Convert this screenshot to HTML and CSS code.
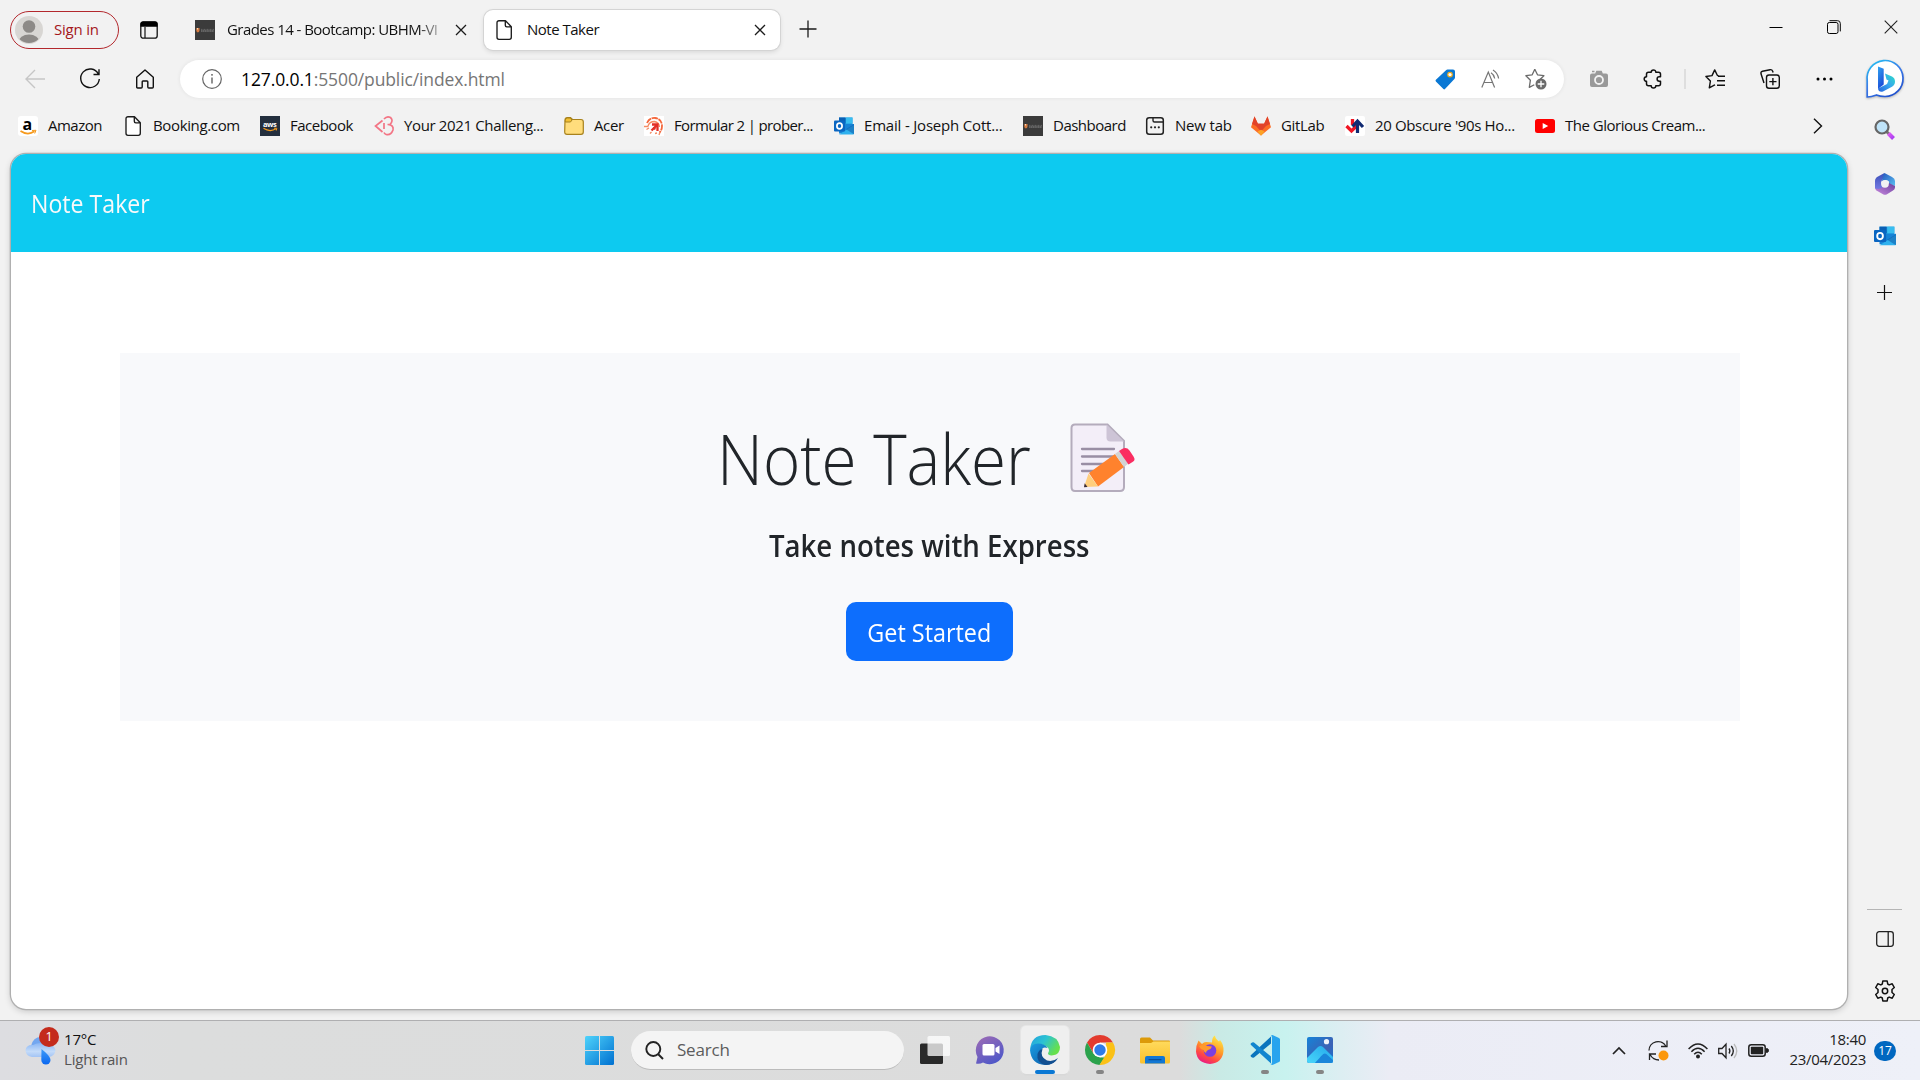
FILE: index.html
```html
<!DOCTYPE html>
<html lang="en">
<head>
<meta charset="utf-8">
<title>Note Taker</title>
<link rel="stylesheet" href="styles.css">
</head>
<body>
<svg class="defs" width="0" height="0" aria-hidden="true">
  <defs>
    <linearGradient id="bingRing" x1="0" y1="0" x2=".6" y2="1"><stop offset="0" stop-color="#20c8f3"/><stop offset=".55" stop-color="#3a7bea"/><stop offset="1" stop-color="#2354cf"/></linearGradient>
    <linearGradient id="bingB" x1="0" y1="0" x2=".4" y2="1"><stop offset="0" stop-color="#31a4f0"/><stop offset="1" stop-color="#1b4bd8"/></linearGradient>
    <linearGradient id="bingC" x1="1" y1="0" x2="0" y2="1"><stop offset="0" stop-color="#2be0c4"/><stop offset=".5" stop-color="#38a6ee"/><stop offset="1" stop-color="#2563dd"/></linearGradient>
    <linearGradient id="win" gradientUnits="userSpaceOnUse" x1="0" y1="0" x2="29" y2="29"><stop offset="0" stop-color="#4fd3fb"/><stop offset="1" stop-color="#0070d0"/></linearGradient>
    <linearGradient id="chat" x1="0" y1="0" x2=".6" y2="1"><stop offset="0" stop-color="#a06cb4"/><stop offset="1" stop-color="#5058c8"/></linearGradient>
    <linearGradient id="edgeTop" x1="0" y1="0" x2="1" y2=".5"><stop offset="0" stop-color="#239fe0"/><stop offset=".5" stop-color="#2cc3d2"/><stop offset="1" stop-color="#67e04c"/></linearGradient>
    <linearGradient id="edgeLow" x1="0" y1="0" x2="1" y2="1"><stop offset="0" stop-color="#1b9de2"/><stop offset="1" stop-color="#0c56a4"/></linearGradient>
    <linearGradient id="folder" x1="0" y1="0" x2="0" y2="1"><stop offset="0" stop-color="#ffda5c"/><stop offset="1" stop-color="#fbc02b"/></linearGradient>
    <linearGradient id="fox" x1=".8" y1="0" x2=".3" y2="1"><stop offset="0" stop-color="#fff04a"/><stop offset=".45" stop-color="#ff9a28"/><stop offset=".75" stop-color="#ff4844"/><stop offset="1" stop-color="#e8188a"/></linearGradient>
    <linearGradient id="photo" x1="0" y1="0" x2="1" y2="1"><stop offset="0" stop-color="#1683d8"/><stop offset=".6" stop-color="#3b62b5"/><stop offset="1" stop-color="#1674d2"/></linearGradient>
    <linearGradient id="hill" x1="0" y1="1" x2="1" y2="0"><stop offset="0" stop-color="#4bd8fb"/><stop offset="1" stop-color="#22a8ea"/></linearGradient>
    <linearGradient id="cloud" x1="0" y1="0" x2="0" y2="1"><stop offset="0" stop-color="#8ab6f4"/><stop offset=".6" stop-color="#c4dbf9"/><stop offset="1" stop-color="#a3c4f5"/></linearGradient>
    <linearGradient id="drop" x1="0" y1="0" x2="0" y2="1"><stop offset="0" stop-color="#3d9bf8"/><stop offset="1" stop-color="#0a67f0"/></linearGradient>
    <linearGradient id="m1" x1="0" y1="0" x2="0" y2="1"><stop offset="0" stop-color="#3a4fb8"/><stop offset="1" stop-color="#7b7fe8"/></linearGradient>
    <linearGradient id="m2" x1="0" y1="0" x2="1" y2="1"><stop offset="0" stop-color="#2456bd"/><stop offset="1" stop-color="#5bc0f2"/></linearGradient>
    <linearGradient id="m3" x1="0" y1="1" x2="1" y2="0"><stop offset="0" stop-color="#c98be0"/><stop offset="1" stop-color="#6a3f9e"/></linearGradient>
    <linearGradient id="handle" x1="0" y1="0" x2="1" y2="1"><stop offset="0" stop-color="#e05df5"/><stop offset="1" stop-color="#a63cf0"/></linearGradient>
    <symbol id="doc" viewBox="0 0 20 20"><path d="M5 .7h6.500l5.800 6V17.300a2 2 0 0 1-2 2H5a2 2 0 0 1-2-2V2.700a2 2 0 0 1 2-2zM11.300.7v4.600a1.500 1.500 0 0 0 1.500 1.500h4.500" fill="#fff" stroke="#1b1b1b" stroke-width="1.350" stroke-linejoin="round"/></symbol>
    <symbol id="uni" viewBox="0 0 20 20"><path fill="#3b3b3b" d="M0 0h20v20H0z"/><path d="M1.300 8h3.200v2.500q0 1.500-1.600 2-1.600-.5-1.600-2z" fill="#d77b40"/><path d="M2 8h1v1.500H2z" fill="#f3d9b9"/><path d="M6 9.400h13" stroke="#777" stroke-width=".7" stroke-dasharray="1 .5"/><path d="M6 11h13" stroke="#969696" stroke-width=".9" stroke-dasharray="1.500 .3"/></symbol>
    <symbol id="outlook" viewBox="0 0 20 20"><path fill="#1f9be0" d="M5 1.500h13.500V10H5z"/><path fill="#0a5fb4" d="M5 1.500h6.500v6H5z"/><path fill="#38bdf0" d="M12 1.500h6.500v6H12z"/><path fill="#1783d6" d="M5 8h15v9.500H5z"/><path fill="#2fb1ee" d="M5 18.500 20 9v8.500a1 1 0 0 1-1 1z"/><path fill="#0f5aa8" d="m20 8.300-8 5 8 5z" opacity=".55"/><rect x="0" y="4.500" width="11" height="11" rx="1" fill="#0a66c2"/><ellipse cx="5.500" cy="10" rx="2.600" ry="2.900" fill="none" stroke="#fff" stroke-width="1.700"/></symbol>
    <symbol id="x" viewBox="0 0 12 12"><path d="M1 1l10 10M11 1 1 11" fill="none" stroke="#1b1b1b" stroke-width="1.300"/></symbol>
  </defs>
</svg>

<div class="browser">
  <header class="tabstrip">
    <div class="signin">
      <svg width="28" height="28" viewBox="0 0 28 28"><clipPath id="av"><circle cx="14" cy="14" r="13"/></clipPath><circle cx="14" cy="14" r="14" fill="#d8d6d3"/><g clip-path="url(#av)" fill="#8d8a87"><circle cx="14" cy="10.500" r="6.300"/><ellipse cx="14" cy="26" rx="10.500" ry="7.500"/></g></svg>
      <span>Sign in</span>
    </div>
    <svg class="tab-actions" width="18" height="18" viewBox="0 0 18 18"><rect x=".8" y=".8" width="16.400" height="16.400" rx="2.500" fill="none" stroke="#111" stroke-width="1.300"/><path d="M.5 5.800V3A2.500 2.500 0 0 1 3 .5h12A2.500 2.500 0 0 1 17.500 3v2.800z" fill="#000"/><path d="M5 6v11" stroke="#111" stroke-width="1.200"/></svg>
    <div class="tab">
      <svg width="20" height="20"><use href="#uni"/></svg>
      <span class="tab-title faded">Grades 14 - Bootcamp: UBHM-VI</span>
      <svg class="tab-close" width="12" height="12"><use href="#x"/></svg>
    </div>
    <div class="tab active">
      <svg width="20" height="20"><use href="#doc"/></svg>
      <span class="tab-title">Note Taker</span>
      <svg class="tab-close" width="12" height="12"><use href="#x"/></svg>
    </div>
    <svg class="new-tab" width="18" height="18" viewBox="0 0 18 18"><path d="M9 .5v17M.5 9h17" stroke="#1b1b1b" stroke-width="1.300"/></svg>
    <div class="window-controls">
      <svg width="14" height="14" viewBox="0 0 14 14"><path d="M.5 7.500h13" stroke="#000" stroke-width="1"/></svg>
      <svg width="14" height="14" viewBox="0 0 14 14" fill="none" stroke="#000"><rect x=".5" y="2.500" width="10.500" height="11" rx="1.800"/><path d="M2.500.7h8A2.700 2.700 0 0 1 13.300 3.400v8"/></svg>
      <svg width="14" height="14" viewBox="0 0 14 14"><path d="m.7.7 12.600 12.600M13.300.7.7 13.300" stroke="#222" stroke-width="1.100"/></svg>
    </div>
  </header>

  <div class="toolbar">
    <svg class="nav" width="20" height="20" viewBox="0 0 20 20" fill="none" stroke="#c6c6c6" stroke-width="1.400"><path d="M20 10H1M10 1 1 10l9 9"/></svg>
    <svg class="nav" width="20" height="20" viewBox="0 0 20 20" fill="none" stroke="#111" stroke-width="1.400"><path d="M18.300 5A9.300 9.300 0 1 0 19.300 10M19 .3v5.200h-5.500"/></svg>
    <svg class="nav home" width="20" height="20" viewBox="0 0 20 20" fill="none" stroke="#111" stroke-width="1.400" stroke-linejoin="round"><path d="M1.700 8.300 10 1l8.300 7.300V18q0 1-1 1h-3.500q-1 0-1-1v-5.200q0-.8-.8-.8H8q-.8 0-.8.800V18q0 1-1 1H2.700q-1 0-1-1z"/></svg>
    <div class="omnibox">
      <svg class="info" width="20" height="20" viewBox="0 0 20 20"><circle cx="10" cy="10" r="9.300" fill="none" stroke="#666" stroke-width="1.200"/><path d="M10 8.500v6" stroke="#555" stroke-width="1.300"/><circle cx="10" cy="5.800" r=".9" fill="#555"/></svg>
      <span class="url"><b>127.0.0.1</b>:5500/public/index.html</span>
      <svg class="tag" width="21" height="21" viewBox="0 0 21 21"><path d="M11 1.200Q11.600.5 12.500.5H18q2 0 2 2v6q0 .8-.6 1.400L10 20q-.8.800-1.600 0L.9 12.400q-.8-.9 0-1.700z" fill="#0a78d4"/><circle cx="15" cy="5.600" r="2.300" fill="#fff" stroke="#e9a91d" stroke-width="1.200"/></svg>
      <svg class="read" width="20" height="20" viewBox="0 0 20 20" fill="none" stroke="#767676" stroke-width="1.200"><path d="M.8 18.500 7.300 3l6.300 15.500M3 13.500h8.600M10 3.800q3 1.800 3.700 5.700M12 1q4.600 2.800 5.600 8.500"/></svg>
      <svg class="fav" width="22" height="22" viewBox="0 0 22 22"><path d="m9.800 1.200 2.700 5.600 6.400.9-4.700 4.500M9.800 1.200 7.200 6.800.9 7.700l4.500 4.500-1.100 7.200 5-2.700" fill="none" stroke="#6b6b6b" stroke-width="1.300" stroke-linejoin="round"/><circle cx="16" cy="16" r="5.500" fill="#6b6b6b"/><path d="M16 12.700v6.600M12.700 16h6.600" stroke="#fff" stroke-width="1.300"/></svg>
    </div>
    <svg class="camera" width="18" height="18" viewBox="0 0 18 18"><path d="M2 3.500h3.200L6.300.8h5.400l1.100 2.700H16q2 0 2 2V15q0 2-2 2H2q-2 0-2-2V5.500q0-2 2-2z" fill="#999"/><circle cx="9" cy="10" r="4" fill="none" stroke="#f2f2f2" stroke-width="1.800"/><path d="M2 1.500h2.500" stroke="#999" stroke-width="1.500"/></svg>
    <svg class="puzzle" width="20" height="20" viewBox="0 0 20 20"><path d="M5.500 3.200h2.700a2.300 2.300 0 0 1 4.600 0h2.700q2 0 2 2v2.600h-1.200a2.200 2.200 0 0 0 0 4.400h1.200v2.600q0 2-2 2h-2.700a2.300 2.300 0 0 1-4.600 0H5.500q-2 0-2-2v-2.500a2.300 2.300 0 0 1 0-4.600V5.200q0-2 2-2z" fill="none" stroke="#111" stroke-width="1.500" stroke-linejoin="round"/></svg>
    <i class="divider"></i>
    <svg class="favs" width="20" height="20" viewBox="0 0 20 20" fill="none" stroke="#111" stroke-width="1.400" stroke-linejoin="round"><path d="M13.500 6.800 12.300 6.300 9.700.9 7 6.600.9 7.500l4.500 4.600-1.100 6.700 5-2.700.8-.3M13 7.200h7M12 11.700h8M12 16.200h8"/></svg>
    <svg class="coll" width="20" height="20" viewBox="0 0 20 20" fill="none" stroke="#111" stroke-width="1.400"><rect x="6.500" y="6" width="12.800" height="13.200" rx="2.500"/><path d="M12.900 9v7.200M9.300 12.600h7.200M4 14 1 4.800Q.5 2.800 2.500 2.300L10 .7q2-.3 2.700 1.500l.4 1.300"/></svg>
    <svg class="more" width="17" height="4" viewBox="0 0 17 4"><circle cx="2" cy="2" r="1.500"/><circle cx="8.500" cy="2" r="1.500"/><circle cx="15" cy="2" r="1.500"/></svg>
  </div>

  <nav class="bookmarks">
    <div class="tight"><svg width="20" height="20" viewBox="0 0 20 20"><rect width="20" height="20" rx="3" fill="#fff"/><text x="4.500" y="13.500" class="logo-a">a</text><path d="M2.500 15q7.500 5 14 .3" fill="none" stroke="#f69a1d" stroke-width="1.700"/><path d="m14 14.500 4-.2-1.300 3.200" fill="none" stroke="#f69a1d" stroke-width="1"/></svg><span>Amazon</span></div>
    <div><svg width="20" height="20"><use href="#doc"/></svg><span>Booking.com</span></div>
    <div class="tight"><svg width="20" height="20" viewBox="0 0 20 20"><path fill="#232f3e" d="M0 0h20v20H0z"/><text x="3" y="10.500" class="logo-aws">aws</text><path d="M3.500 12.300q6.500 4.200 12.500.5" fill="none" stroke="#f39a1e" stroke-width="1.200"/><path d="M14 12.200h2.800l-.5 2.300" fill="none" stroke="#f39a1e"/></svg><span>Facebook</span></div>
    <div><svg width="20" height="20" viewBox="0 0 20 20" fill="none" stroke="#f37585" stroke-width="1.700"><path d="M8.500 4.500 1.500 10l7 6M10 7v6M10 3q3-3.500 6.500-1.500 3.300 3-.5 7h-2.500M14 8.500q6 .5 5 5.500-2 5.500-6.800 4.500-1.500-.5-2.200-2"/></svg><span>Your 2021 Challeng...</span></div>
    <div><svg width="20" height="20" viewBox="0 0 20 20"><path d="M1 4q0-2.500 2.500-2.500h3l2 2H17q2.300 0 2.300 2.300V16q0 2.300-2.300 2.300H3Q.7 18.300.7 16z" fill="#ffdd7c" stroke="#a8821c" stroke-width="1.200"/><path d="M1.300 6V4.200Q1.300 2 3.500 2h2.800L8 4 6.500 6z" fill="#f2bf32" stroke="#a8821c"/></svg><span>Acer</span></div>
    <div class="tighter"><svg width="20" height="20" viewBox="0 0 20 20" fill="none"><path fill="#fff" d="M0 0h20v20H0z"/><path d="M3 7q2.500-5.500 8-5Q18 3 18 10q0 4-2.500 6.500" stroke="#f4673c" stroke-width="1.800" stroke-dasharray="6 .7"/><path d="M4 10q1.500-4.500 6.500-4.500Q15 6.500 15.500 11M0 10.500h4.500M2.500 13.500l2.500-1.500M6 17.500l1.500-1.500M11 17.500l2-.5M15 19l1-3" stroke="#f58b63" stroke-width="1.300"/><path d="M8 8.500h5.500V15M13 9l-5.500 5.500M9 12l2.500 1" stroke="#e32f27" stroke-width="2.300"/></svg><span>Formular 2 | prober...</span></div>
    <div class="loose"><svg width="20" height="20"><use href="#outlook"/></svg><span>Email - Joseph Cott...</span></div>
    <div class="tight"><svg width="20" height="20"><use href="#uni"/></svg><span>Dashboard</span></div>
    <div class="loose"><svg width="20" height="20" viewBox="0 0 20 20"><rect x="1.700" y="1.700" width="16.600" height="16.600" rx="2.500" fill="none" stroke="#222" stroke-width="1.500"/><path d="M8 2v2.500Q8 6 9.500 6H18" fill="none" stroke="#222" stroke-width="1.400"/><g fill="#222"><circle cx="6.200" cy="11.300" r="1.100"/><circle cx="10" cy="11.300" r="1.100"/><circle cx="13.800" cy="11.300" r="1.100"/></g></svg><span>New tab</span></div>
    <div><svg width="20" height="20" viewBox="0 0 20 20"><path fill="#fc6d26" d="M3.500.5 7 8h6L16.500.5 20 11.300 10 19.500 0 11.300z"/><path fill="#e2432a" d="M3.500.2 6.800 7.500h6.400L16.500.2 19 8l-4 2-5 5.500L5 10 1 8z"/><path fill="#fca326" d="m6.500 15.500 3.500-1.800 3.500 1.800-3.500 4.200z"/></svg><span>GitLab</span></div>
    <div><svg width="20" height="20" viewBox="0 0 20 20" fill="none"><rect width="20" height="20" rx="2" fill="#fff"/><path d="M7.500 3v6M1.500 10l5 5 6-6" stroke="#f01523" stroke-width="3.300"/><path d="M12.500 17V6M7.500 10.500l5-5.500 5.500 6" stroke="#102a72" stroke-width="3.200"/></svg><span>20 Obscure '90s Ho...</span></div>
    <div class="tight"><svg width="20" height="20" viewBox="0 0 20 20"><rect y="3" width="20" height="14" rx="2.500" fill="#f00"/><path d="m7.700 7 5.500 3-5.500 3z" fill="#fff"/></svg><span>The Glorious Cream...</span></div>
    <svg class="overflow" width="10" height="16" viewBox="0 0 10 16"><path d="m1 .8 7.500 7.200L1 15.200" fill="none" stroke="#111" stroke-width="1.400"/></svg>
  </nav>

  <main class="page">
    <div class="navbar"><a>Note Taker</a></div>
    <section class="hero">
      <h1><span>Note Taker</span>
        <svg width="66" height="70" viewBox="0 0 66 70"><path d="M5 1.500h32.500L54 18v46q0 4-4 4H5q-3.500 0-3.500-4V5q0-3.500 3.500-3.500z" fill="#f3eef8" stroke="#b4acbc" stroke-width="2"/><path d="M36.500 1.500 54 18.500H40.500q-4 0-4-4z" fill="#cdc4d6"/><path d="M12 26h32M12 33.500h32M12 41h24M12 48h14" stroke="#998ea4" stroke-width="2.300" stroke-linecap="round"/><path d="m19 50 26-19 9 13-26 19.500z" fill="#ff822d"/><path d="m45 31 4-3 9.500 12.500-4.500 3.500z" fill="#d3d3d3"/><path d="m49 28 3-2q4.500-2.500 7.500 1.500l4 6q2.500 4-1 5.500l-4 2.500z" fill="#fa2e61"/><path d="m18.500 50.500 9.500 13-14 .6z" fill="#ffce7c"/><path d="m14.700 60.200 2.800 3.700-3.500.3z" fill="#382c3a"/></svg>
      </h1>
      <h4>Take notes with Express</h4>
      <a class="btn"><span>Get Started</span></a>
    </section>
  </main>

  <aside class="sidebar">
    <svg class="bing" width="38" height="38" viewBox="0 0 38 38"><path d="M1.200 37V21A18 18 0 1 1 19 36.500q-5 0-8.500-1.500Q5 37 1.200 37z" fill="#fff" stroke="url(#bingRing)" stroke-width="1.700"/><path d="m12 6.500 5.700 2.300v15.700L12 29z" fill="url(#bingB)"/><path d="m19 13.500 7 3q3 1.500 3 5 0 3.500-3 5.300L17 31.500q-4.500 1-5-3l9-4.500 1.500-3.500-2-1z" fill="url(#bingC)"/></svg>
    <svg class="lens" width="22" height="22" viewBox="0 0 22 22"><path d="m12 12 3 3" stroke="#777" stroke-width="3"/><path d="m14.500 14.500 5 5" stroke="url(#handle)" stroke-width="4"/><circle cx="8" cy="8" r="6.500" fill="#bfe3f8" stroke="#666" stroke-width="2.200"/></svg>
    <svg class="m365" width="22" height="22" viewBox="0 0 22 22"><path fill="url(#m1)" d="M10.500 0 4 3.500Q1 5 1 8v7.500L5 18l4-3-2-5q0-2 2-4z"/><path fill="url(#m2)" d="M10.500 0 18 4q3 1.500 3 4v5l-6-2V8.500Q12 6 8 8l1-6z"/><path fill="url(#m3)" d="M1 15q4 2 7-.5l5-1.500 2-3 6 3v1.500q0 2-2 3l-6 3.700q-2 1.200-4 0l-7-4z"/><circle cx="11" cy="11" r="3.800" fill="#f2f2f2"/></svg>
    <svg class="olk" width="22" height="22"><use href="#outlook"/></svg>
    <svg class="add" width="15" height="15" viewBox="0 0 15 15"><path d="M7.500 0v15M0 7.500h15" stroke="#111" stroke-width="1.200"/></svg>
    <i class="rule"></i>
    <svg class="panel" width="18" height="16" viewBox="0 0 18 16" fill="none" stroke="#222" stroke-width="1.300"><rect x=".7" y=".7" width="16.600" height="14.600" rx="2.500"/><path d="M12.200 1v14"/></svg>
    <svg class="gear" width="22" height="22" viewBox="0 0 22 22" fill="none" stroke="#111" stroke-width="1.500" stroke-linejoin="round"><path d="M8.800 1h4.400l.5 3 1.500.9 3-1.100 2.100 3.700-2.300 2v3l2.300 2-2.100 3.700-3-1.100-1.500.9-.5 3H8.800l-.5-3-1.500-.9-3 1.100-2.100-3.700 2.300-2v-3l-2.300-2 2.100-3.700 3 1.100 1.500-.9z"/><circle cx="11" cy="11" r="2.700"/></svg>
  </aside>
</div>

<footer class="taskbar">
  <div class="weather">
    <div class="weather-icon">
      <svg width="31" height="30" viewBox="0 0 31 30"><path d="M6 11Q8 2 16 2t10 9z" fill="#73a7f0"/><path d="M7 22Q1 21 .5 15.500 1 9.500 8 10q8-4 13 0 8-1 9.500 5-.5 6.500-7.500 7z" fill="url(#cloud)"/><path d="M16.500 14q9 7 9 11a4.600 4.600 0 0 1-9.200 0z" fill="url(#drop)"/></svg>
      <b>1</b>
    </div>
    <div><p>17°C</p><p class="dim">Light rain</p></div>
  </div>

  <div class="apps">
    <div class="slot"><svg width="29" height="29" viewBox="0 0 29 29" fill="url(#win)"><path d="M1.500 0H14v14H0V1.500Q0 0 1.500 0z"/><path d="M15 0h12.500Q29 0 29 1.500V14H15z"/><path d="M0 15h14v14H1.500Q0 29 0 27.500z"/><path d="M15 15h14v12.500q0 1.500-1.500 1.500H15z"/></svg></div>
    <div class="search"><svg width="19" height="19" viewBox="0 0 19 19" fill="none" stroke="#222" stroke-width="1.900"><circle cx="8.300" cy="8" r="7"/><path d="m13 13 5 5"/></svg><span>Search</span></div>
    <div class="slot"><svg width="30" height="30" viewBox="0 0 30 30"><rect x="0" y="8.500" width="23" height="20.500" rx="1.500" fill="#292929"/><rect x="7.500" y="1" width="22.500" height="20" rx="1.500" fill="#fff" fill-opacity=".75"/></svg></div>
    <div class="slot"><svg width="30" height="30" viewBox="0 0 30 30"><path d="M1 28.500 2.500 22A14 14 0 1 1 8 27.500q-3 1.700-7 1z" fill="url(#chat)"/><rect x="7.500" y="9" width="12" height="11.500" rx="1.500" fill="#fff"/><path d="M20.500 13l4-2.500v8.500l-4-2.500z" fill="#fff"/></svg></div>
    <div class="slot current"><svg width="30" height="30" viewBox="0 0 30 30"><path d="M0 15Q1 0 15.500 0 28 1 30 12q0 7.500-7 8.300-5 .5-5-2 2-3 0-5.500Q13 8 6 9.500 2 11 0 15z" fill="url(#edgeTop)"/><path d="M0 15q1-6.500 8-6.500 7 0 9.500 4.500-5-2-6.500 3-1 7 5.500 10 5.500 2 10-1Q22 30 15 30 1 29 0 15z" fill="url(#edgeLow)"/><path d="M12.500 14q-3 8 4.500 11.500 6 1.700 11-2.500-4 7-12 7Q6 28 7.500 19q1.500-4.500 5-5z" fill="#124f91"/></svg><i class="bar"></i></div>
    <div class="slot"><svg width="30" height="30" viewBox="0 0 30 30"><path d="M2 7.500A15 15 0 0 1 28 7.500H15l-6.500 11z" fill="#e33b2e"/><path d="M2 7.500 8.500 18.700 15 22.500h5L14.500 30A15 15 0 0 1 2 7.500z" fill="#2ba24c"/><path d="M28 7.500A15 15 0 0 1 14.500 30l7-11.500-.5-11z" fill="#fbc116"/><circle cx="15" cy="15" r="7.300" fill="#fff"/><circle cx="15" cy="15" r="5.700" fill="#2f7be8"/></svg><i class="dot"></i></div>
    <div class="slot"><svg width="30" height="30" viewBox="0 0 30 30"><path d="M0 4q0-1.500 1.500-1.500h8.500l3 3H29q1 0 1 1V12H0z" fill="#dc9a0a"/><path d="M0 8h11l2.500-1.500H30V27q0 1.500-1.500 1.500h-27Q0 28.500 0 27z" fill="url(#folder)"/><path d="M5 28.500V23q0-2 2-2h16q2 0 2 2v5.500z" fill="#1277d4"/><path d="M9 24.700h12" stroke="#0b4f99" stroke-width="1.200" stroke-linecap="round"/></svg></div>
    <div class="slot"><svg width="30" height="30" viewBox="0 0 30 30"><path d="M3.500 5.500 7 9q2-2.500 5-2l5 .5Q17 2 20 .5q0 3 4 6l1-1.500q4 5 3.500 11Q27.500 28 15 29 2 28 1 16.500 1 10 3.500 5.500z" fill="url(#fox)"/><circle cx="15" cy="15.500" r="6.300" fill="#7a3fe0"/><path d="M4 11q5-2 8 0l5 .5q-1 3-4 3.500-2 1-2 3-2-1-2.500-3Q5 14 4 11z" fill="#ff9a2c"/></svg></div>
    <div class="slot"><svg width="30" height="30" viewBox="0 0 30 30"><path d="m1 20 20-18.500v7L4 22.500q-1.500.5-3-.8-1-.8 0-1.700z" fill="#0a74bd"/><path d="M1 10 21 28.500v-7L4 7.500Q2.500 7 1 8.300 0 9 1 10z" fill="#1285cf"/><path d="M21 .5 22.500 0 29 3q1 .5 1 1.500v21q0 1-1 1.500l-6.500 3-2-.8q1.500 0 1.500-2V3q0-2-1-2.500z" fill="#28a4ee"/></svg><i class="dot"></i></div>
    <div class="slot"><svg width="26" height="26" viewBox="0 0 26 26"><clipPath id="ph"><rect width="26" height="26" rx="2"/></clipPath><g clip-path="url(#ph)"><path d="M0 0h26v26H0z" fill="url(#photo)"/><path d="M-1 22 11 10q2.500-2 5 0l11 11v6H-1z" fill="url(#hill)"/><path d="M7 27l5.500-6q1-1.200 2-2.200l1.800-1.700q1.500-1.200 3 0L27 24v3z" fill="#1a86da"/></g><circle cx="19.500" cy="4.700" r="2.600" fill="#eef3fb"/></svg><i class="dot"></i></div>
  </div>

  <div class="tray">
    <svg class="up" width="14" height="8" viewBox="0 0 14 8"><path d="m1 7 6-6 6 6" fill="none" stroke="#222" stroke-width="1.700"/></svg>
    <svg class="sync" width="21" height="21" viewBox="0 0 21 21" fill="none" stroke="#222" stroke-width="1.300"><path d="M1 10.500A9 9 0 0 1 18 6.500M19 .5V6.500h-6M1.500 20V14H8M2 14.500Q5 20 11 20"/><circle cx="15.500" cy="15.500" r="5" fill="#fb970c" stroke="none"/></svg>
    <svg class="wifi" width="20" height="16" viewBox="0 0 20 16" fill="none" stroke="#222" stroke-width="1.500"><path d="M.6 6Q10-4 19.400 6M3.400 8.800q6.600-7 13.200 0M6.200 11.200q3.800-4 7.600 0"/><circle cx="10" cy="13.500" r="2" fill="#222" stroke="none"/></svg>
    <svg class="vol" width="20" height="16" viewBox="0 0 20 16" fill="none" stroke="#222" stroke-width="1.300"><path d="M.7 5.500H4l4-4.300v13.600l-4-4.300H.7zM11 5.500q1.800 2.500 0 5M13.300 3q4 5 0 10"/><path d="M16 1q5.500 7 0 14" stroke="#bbb"/></svg>
    <svg class="bat" width="21" height="13" viewBox="0 0 21 13"><rect x=".8" y=".8" width="16.400" height="11.400" rx="2.500" fill="none" stroke="#222" stroke-width="1.500"/><rect x="2.800" y="2.800" width="12.400" height="7.400" rx=".8" fill="#222"/><path d="M18.500 4.500q2 0 2 2t-2 2z" fill="#222" stroke="#222"/></svg>
    <div class="clock"><p>18:40</p><p>23/04/2023</p></div>
    <b class="count">17</b>
  </div>
</footer>
</body>
</html>
```
FILE: styles.css
```css
* { box-sizing: border-box; }
html, body { height: 100%; margin: 0; }
body {
  display: grid;
  grid-template-rows: 1020px 60px;
  overflow: hidden;
  background: #f2f2f2;
  color: #111;
  font-family: "Open Sans", "Noto Sans", sans-serif;
  font-size: 15px;
  line-height: 20px;
  letter-spacing: -.2px;
  white-space: nowrap;
}
p { margin: 0; }
svg { flex: none; display: block; overflow: visible; }
.defs { position: absolute; }

.browser {
  display: grid;
  grid-template-columns: 1850px 70px;
  grid-template-rows: 55px 49px 48px 1fr;
  min-height: 0;
}

/* Tab strip */
.tabstrip { grid-column: 1 / 3; display: flex; padding: 10px 0 0 10px; }
.signin {
  display: flex; align-items: center; gap: 11px;
  width: 109px; height: 38px; margin-top: 1px; padding: 0 4px;
  border: 1.5px solid #b3282d; border-radius: 19px;
  color: #a4171c;
}
.signin span, .tab-title { padding-bottom: 2px; }
.tab-actions { margin: 11px 19px 0 21px; }
.tab {
  display: flex; align-items: center;
  width: 296px; height: 40px; margin-right: 3px; padding: 0 14px 0 9px;
}
.tab:not(.active) { padding: 0 11px 0 18px; width: 304px; }
.tab.active {
  background: #fff; border-radius: 9px; margin: 0;
  box-shadow: 0 0 0 1px #d4d4d4, 0 2px 5px rgba(0,0,0,.12);
  padding-left: 10px;
  font-weight: 500;
  letter-spacing: -.5px;
}
.tab-title { flex: 1; min-width: 0; margin: 0 12px 0 13px; }
.tab-title.faded { flex: 0 0 217px; margin: 0 11px 0 12px; letter-spacing: -.55px; color: transparent; background: linear-gradient(90deg, #111 88%, rgba(17,17,17,.15) 100%); -webkit-background-clip: text; background-clip: text; }
.new-tab { margin: 10px 0 0 19px; }
.window-controls { display: flex; gap: 43.500px; margin: 10px 22px 0 auto; }

/* Toolbar */
.toolbar { display: flex; align-items: center; padding: 0 17px 1px 25px; }
.nav { margin-right: 35px; }
.nav.home { margin-right: 25px; }
.omnibox {
  flex: none; display: flex; align-items: center;
  width: 1384px; height: 38px; padding-left: 22px; margin-right: 26px;
  background: #fff; border-radius: 19px; box-shadow: 0 0 4px rgba(0,0,0,.07);
}
.url { margin: 0 auto 0 19px; padding-bottom: 1px; font-size: 17.500px; line-height: 24px; letter-spacing: -.12px; color: #767676; }
.url b { font-weight: 400; color: #000; }
.tag { margin-right: 25px; }
.read { margin-right: 24px; }
.fav { margin-right: 17px; }
.camera { margin-right: 35px; }
.puzzle { margin-right: 21px; }
.divider { width: 2px; height: 20px; margin-right: 19px; background: #dedede; }
.favs { margin-right: 35px; }
.coll { margin-right: 36px; }

/* Favourites bar */
.bookmarks {
  display: grid; align-items: center;
  grid-template-columns: 105px 137px 114px 190px 80px 190px 189px 122px 106px 94px 190px 278px 10px;
  padding: 0 0 4px 18px;
  letter-spacing: -.36px;
}
.bookmarks div { display: flex; align-items: center; gap: 10px; }
.bookmarks span { padding-bottom: 2px; }
.bookmarks .tight { letter-spacing: -.5px; }
.bookmarks .tighter { letter-spacing: -.63px; }
.bookmarks .loose { letter-spacing: -.19px; }
.logo-a { font: 700 16px/1 "Open Sans", sans-serif; }
.logo-aws { font: 700 7.500px/1 "Open Sans", sans-serif; fill: #fff; }

/* Web page */
.page {
  grid-column: 1; margin: 2px 3px 11px 11px;
  background: #fff; border-radius: 15px; overflow: hidden;
  box-shadow: 0 0 0 1.300px #b0b0b0, 0 2px 7px rgba(0,0,0,.2);
}
.navbar { height: 98px; padding: 32px 20px; background: #0dcaf0; color: #f8f9fa; font-size: 25px; line-height: 34px; letter-spacing: 0; }
.navbar a { display: inline-block; transform: scaleX(.925); transform-origin: left; }
.hero {
  display: flex; flex-direction: column; align-items: center;
  width: 1620px; height: 368px; margin: 101px auto 0 109px; padding-top: 63px;
  background: #f8f9fb; color: #212529; letter-spacing: 0;
}
.hero h1 { display: flex; align-items: center; gap: 39px; margin: 0 0 28px -7px; font-size: 70px; line-height: 84px; font-weight: 300; height: 84px; }
.hero h1 span { display: block; margin-right: -31px; transform: scaleX(.91); transform-origin: left; }
.hero h4 { margin: 0 0 38px -2px; font-size: 30px; line-height: 36px; font-weight: 600; transform: scaleX(.92); }
.btn { width: 167px; height: 59px; margin-left: -2px; border-radius: 10px; background: #0d6efd; color: #fff; font-size: 25px; line-height: 60px; text-align: center; }
.btn span { display: inline-block; transform: scaleX(.935); }

/* Edge sidebar */
.sidebar { grid-column: 2; grid-row: 2 / 5; display: flex; flex-direction: column; align-items: center; padding: 5px 1px 0 0; }
.bing { margin-bottom: 21px; filter: drop-shadow(0 1px 1px rgba(0,0,0,.25)); }
.lens { margin-bottom: 32px; }
.m365 { margin-bottom: 30px; }
.olk { margin-bottom: 38px; }
.rule { width: 35px; height: 1px; margin: auto 0 21px; background: #b5b5b5; }
.panel { margin-bottom: 33px; }
.gear { margin-bottom: 18px; }

/* Taskbar */
.taskbar {
  display: grid; grid-template-columns: 575px 1fr auto;
  border-top: 1px solid #afafb1;
  background: linear-gradient(90deg, #dddde1 0, #dcdddd 180px, #dcdcdc 1180px, #c9eae5 1220px, #c8f2ef 1285px, #dceef2 1340px, #ebecf5 1390px, #eef0f8 1920px);
}
.weather { display: flex; padding: 8px 0 0 25px; gap: 8px; }
.weather-icon { position: relative; width: 31px; padding-top: 6px; }
.weather-icon b {
  position: absolute; left: 14px; top: -2px; width: 20px; height: 20px;
  border-radius: 50%; background: #c42b1c; color: #fff;
  font-size: 12.500px; font-weight: 500; text-align: center;
}
.dim { color: #555; }
.apps { display: flex; gap: 7px; padding-top: 5px; }
.slot { position: relative; display: grid; place-items: center; width: 48px; height: 48px; border-radius: 5px; }
.current { background: #efefef; box-shadow: 0 0 0 1px rgba(255,255,255,.3), 0 1px 1px rgba(0,0,0,.1); }
.slot i { position: absolute; bottom: 0; left: 20px; width: 8px; height: 4px; border-radius: 2px; background: #858585; }
.slot .bar { left: 14px; width: 20px; background: #0a78d4; }
.search {
  display: flex; align-items: center; gap: 13px;
  width: 273px; height: 39px; margin: 5px 0 0 1px; padding-left: 14px;
  border-radius: 19.500px; background: #f4f4f4; border-bottom: 1px solid #bbb;
  font-size: 17px; color: #5c5c5c;
}
.tray { display: flex; align-items: center; padding-right: 24px; color: #222; }
.up { margin-right: 22px; }
.sync { margin-right: 19px; }
.wifi { margin-right: 10px; }
.vol { margin-right: 10px; }
.bat { margin-right: 20px; }
.clock { width: 77px; margin: -4px 8px 0 0; display: flex; flex-direction: column; align-items: flex-end; letter-spacing: -.3px; }
.count { width: 22px; height: 20px; border-radius: 10px; background: #0067c0; color: #fff; font-size: 12px; font-weight: 500; text-align: center; }
```
